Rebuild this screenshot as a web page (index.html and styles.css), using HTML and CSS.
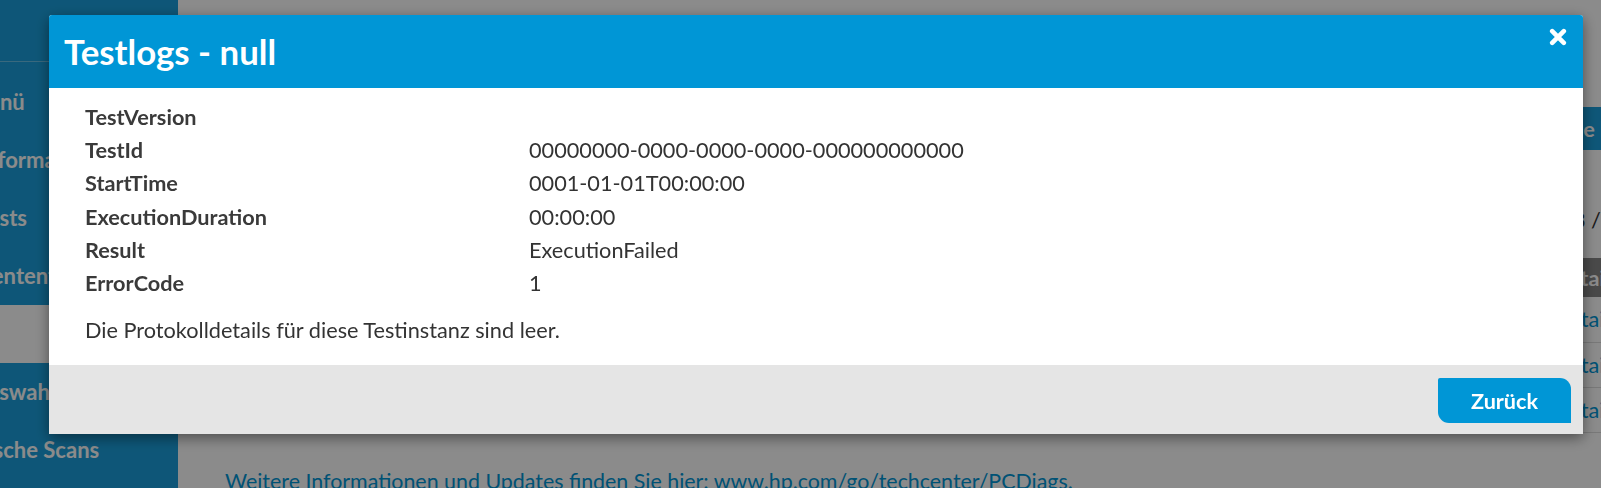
FILE: index.html
```html
<!DOCTYPE html>
<html lang="de">
<head>
<meta charset="utf-8">
<title>Testlogs</title>
<link rel="stylesheet" href="styles.css">
</head>
<body>
<div class="page">
  <aside class="sidebar">
    <div class="sidebar-head"></div>
    <nav class="nav">
      <div class="nav-item">Hauptmenü</div>
      <div class="nav-item">Systeminformationen</div>
      <div class="nav-item">Systemtests</div>
      <div class="nav-item">Komponententests</div>
      <div class="nav-item active"></div>
      <div class="nav-item">Sprachauswahl</div>
      <div class="nav-item">Biometrische Scans</div>
    </nav>
  </aside>
  <main class="main">
    <div class="toolbar">
      <button class="tool-btn">Alle löschen</button>
    </div>
    <div class="pager">
      <span class="pager-title"></span>
      <span class="pager-count">1 - 3 / 3 Einträge</span>
    </div>
    <table class="log-table">
      <thead>
        <tr><th class="c1"></th><th class="c2"></th><th class="c3"></th><th class="c4"></th><th class="c5">Details</th></tr>
      </thead>
      <tbody>
        <tr><td></td><td></td><td></td><td></td><td><a href="#">Details</a></td></tr>
        <tr><td></td><td></td><td></td><td></td><td><a href="#">Details</a></td></tr>
        <tr><td></td><td></td><td></td><td></td><td><a href="#">Details</a></td></tr>
      </tbody>
    </table>
    <p class="more">Weitere Informationen und Updates finden Sie hier: <a href="#">www.hp.com/go/techcenter/PCDiags.</a></p>
  </main>
</div>

<div class="backdrop"></div>

<div class="modal" role="dialog" aria-labelledby="modal-title">
  <header class="modal-head">
    <h1 id="modal-title" class="modal-title">Testlogs - null</h1>
    <button class="modal-close" aria-label="Schließen">
      <svg width="18" height="18" viewBox="0 0 18 18" aria-hidden="true">
        <path d="M3.2 3.2 L14.8 14.8 M14.8 3.2 L3.2 14.8" stroke="#fff" stroke-width="4.6" stroke-linecap="round" fill="none"/>
      </svg>
    </button>
  </header>
  <section class="modal-body">
    <div class="props">
      <div class="prop-key">TestVersion</div><div class="prop-val"></div>
      <div class="prop-key">TestId</div><div class="prop-val">00000000-0000-0000-0000-000000000000</div>
      <div class="prop-key">StartTime</div><div class="prop-val">0001-01-01T00:00:00</div>
      <div class="prop-key">ExecutionDuration</div><div class="prop-val">00:00:00</div>
      <div class="prop-key">Result</div><div class="prop-val">ExecutionFailed</div>
      <div class="prop-key">ErrorCode</div><div class="prop-val">1</div>
    </div>
    <p class="empty-note">Die Protokolldetails für diese Testinstanz sind leer.</p>
  </section>
  <footer class="modal-foot">
    <button class="btn-back">Zurück</button>
  </footer>
</div>
</body>
</html>
```
FILE: styles.css
```css
html, body {
  margin: 0;
  padding: 0;
  height: 100%;
  overflow: hidden;
}
body {
  font-family: Lato, "Liberation Sans", sans-serif;
  color: #333;
  background: #fff;
}

/* ---------- background page ---------- */
.page {
  display: flex;
  width: 1830px;
  height: 100%;
  margin-left: -100px;
}
.sidebar {
  width: 278px;
  flex: none;
  background: #1a9fdc;
  color: #fff;
  display: flex;
  flex-direction: column;
}
.sidebar-head {
  height: 61px;
  border-bottom: 1px solid rgba(255, 255, 255, 0.35);
  margin-bottom: 11px;
}
.nav {
  display: flex;
  flex-direction: column;
}
.nav-item {
  height: 58px;
  line-height: 58px;
  padding-left: 9px;
  font-weight: 700;
  font-size: 22px;
  white-space: nowrap;
  overflow: hidden;
}
.nav-item.active {
  background: #fff;
}
.main {
  flex: 1;
  background: #fff;
  padding: 107px 0 0 47px;
  min-width: 0;
}
.toolbar {
  display: flex;
  justify-content: flex-end;
  height: 43px;
}
.tool-btn {
  height: 43px;
  border: 0;
  padding: 0 56px 0 14px;
  background: #1a9fdc;
  color: #fff;
  font: 700 21.7px Lato, sans-serif;
  white-space: pre;
}
.pager {
  display: flex;
  justify-content: space-between;
  align-items: center;
  height: 30px;
  margin-top: 55px;
  font-size: 21.7px;
  padding-right: 27px;
}
.log-table {
  margin-top: 23px;
  width: 1505px;
  table-layout: fixed;
  border-collapse: collapse;
  font-size: 21.7px;
  border-left: 1px solid #ccc;
}
.log-table th,
.log-table td {
  box-sizing: border-box;
  white-space: nowrap;
  overflow: hidden;
  padding: 0 15px;
}
.log-table th {
  height: 39px;
  background: #878787;
  color: #fff;
  text-align: left;
  font-weight: 700;
}
.log-table td {
  height: 45px;
  border-bottom: 1px solid #ddd;
  border-right: 1px solid #ddd;
}
.log-table .c1 { width: 178px; }
.log-table .c2 { width: 460px; }
.log-table .c3 { width: 589px; }
.log-table .c4 { width: 85px; }
.log-table .c5 { width: 193px; }
.log-table a {
  color: #0096d6;
  text-decoration: none;
}
.more {
  margin: 35px 0 0;
  font-size: 21.4px;
  line-height: 26px;
  color: #0096d6;
}
.more a {
  color: #0096d6;
  text-decoration: none;
}

/* ---------- overlay ---------- */
.backdrop {
  position: fixed;
  inset: 0;
  background: rgba(0, 0, 0, 0.455);
}

/* ---------- modal ---------- */
.modal {
  position: fixed;
  left: 49px;
  top: 15px;
  width: 1534px;
  display: flex;
  flex-direction: column;
  background: #fff;
  border-radius: 3px 3px 0 0;
  box-shadow: 0 4px 14px rgba(0, 0, 0, 0.45);
}
.modal-head {
  position: relative;
  height: 73px;
  background: #0096d6;
  border-radius: 3px 3px 0 0;
  display: flex;
  align-items: center;
  padding-left: 15px;
}
.modal-title {
  margin: 0;
  color: #fff;
  font-size: 34.8px;
  font-weight: 700;
  line-height: 1;
  padding-top: 2px;
}
.modal-close {
  position: absolute;
  top: 13px;
  right: 16px;
  width: 18px;
  height: 18px;
  padding: 0;
  border: 0;
  background: none;
  display: flex;
}
.modal-body {
  padding: 12px 36px 18px;
  font-size: 21.7px;
  color: #333;
}
.props {
  display: grid;
  grid-template-columns: 444px 1fr;
  grid-auto-rows: 33.3px;
  align-items: center;
}
.prop-key {
  font-weight: 700;
  color: #3a3a3a;
}
.empty-note {
  margin: 14px 0 0;
  line-height: 33.3px;
}
.modal-foot {
  height: 69px;
  box-sizing: border-box;
  background: #e5e5e5;
  display: flex;
  justify-content: flex-end;
  align-items: flex-start;
  padding: 13px 12px 0 0;
}
.btn-back {
  width: 133px;
  height: 45px;
  border: 0;
  border-radius: 2px 11px 0 11px;
  background: #0096d6;
  color: #fff;
  font: 700 21.6px Lato, sans-serif;
  padding: 0;
}
```
